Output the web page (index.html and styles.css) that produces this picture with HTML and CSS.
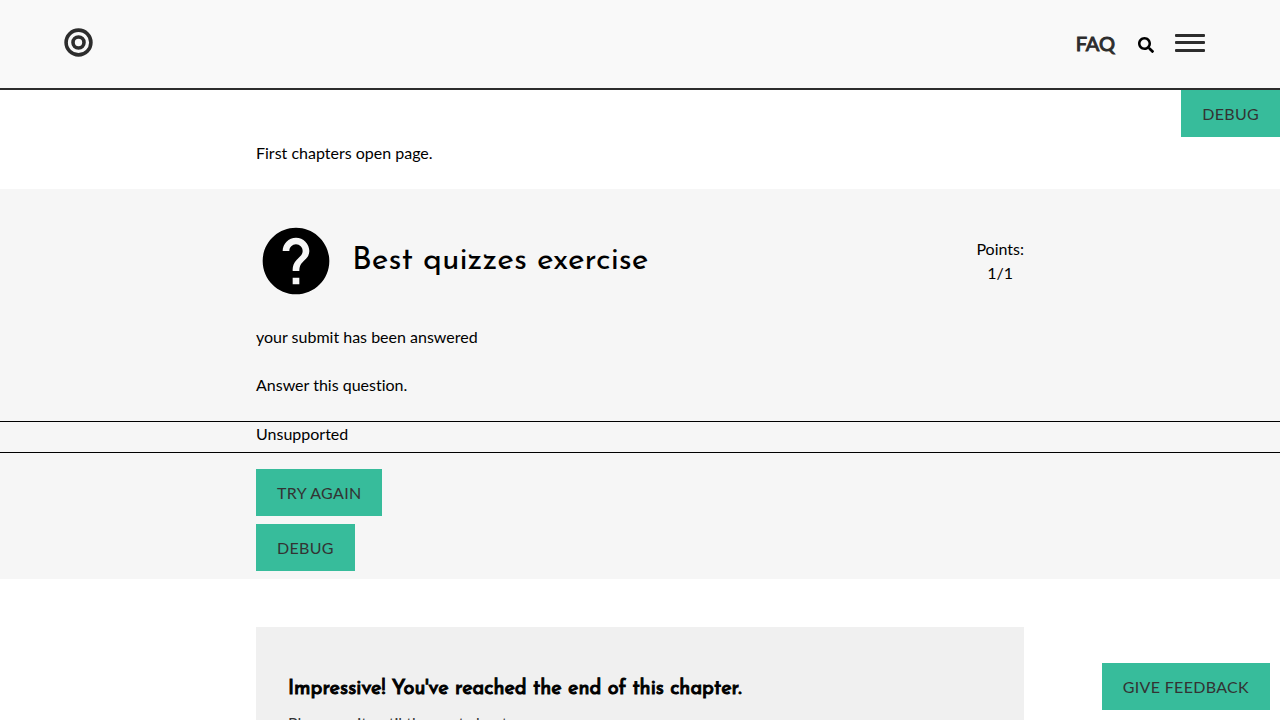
FILE: index.html
```html
<!DOCTYPE html>
<html lang="en">
<head>
<meta charset="utf-8">
<meta name="viewport" content="width=device-width, initial-scale=1">
<title>First chapters open page</title>
<link rel="stylesheet" href="styles.css">
</head>
<body>
<header class="site-header">
  <a class="logo" href="#" aria-label="Home">
    <svg width="29" height="29" viewBox="0 0 29 29" fill="none" stroke="#2d2d2d" stroke-width="3.6" aria-hidden="true"><circle cx="14.5" cy="14.5" r="12.4"/><circle cx="14.5" cy="14.5" r="5.5"/></svg>
  </a>
  <nav class="site-nav">
    <a class="nav-link" href="#">FAQ</a>
    <button class="icon-button search-button" type="button" aria-label="Search">
      <svg width="16" height="16" viewBox="0 0 512 512" aria-hidden="true"><path d="M505 442.7L405.300 343c-4.500-4.500-10.600-7-17-7H372c27.600-35.300 44-79.700 44-128C416 93.100 322.900 0 208 0S0 93.100 0 208s93.100 208 208 208c48.300 0 92.700-16.400 128-44v16.300c0 6.400 2.500 12.500 7 17l99.700 99.700c9.400 9.400 24.600 9.400 33.900 0l28.300-28.300c9.400-9.400 9.400-24.600.1-34zM208 336c-70.700 0-128-57.200-128-128 0-70.700 57.200-128 128-128 70.700 0 128 57.200 128 128 0 70.700-57.200 128-128 128z"/></svg>
    </button>
    <button class="icon-button menu-button" type="button" aria-label="Open menu">
      <svg width="30" height="18" viewBox="0 0 30 18" fill="#2d2d2d" aria-hidden="true"><rect width="30" height="3" rx="1"/><rect y="7" width="30" height="3" rx="1"/><rect y="15" width="30" height="3" rx="1"/></svg>
    </button>
  </nav>
</header>
<main>
  <div class="page-tools"><button class="button" type="button">Debug</button></div>
  <p class="container intro">First chapters open page.</p>
  <section class="exercise">
    <div class="container exercise-header">
      <svg class="exercise-icon" viewBox="0 0 24 24" aria-hidden="true"><path d="M12 2C6.480 2 2 6.480 2 12s4.480 10 10 10 10-4.480 10-10S17.520 2 12 2zm1 17h-2v-2h2v2zm2.070-7.750l-.9.920C13.450 12.900 13 13.500 13 15h-2v-.5c0-1.100.450-2.100 1.170-2.830l1.240-1.260c.370-.360.590-.860.590-1.410 0-1.100-.9-2-2-2s-2 .9-2 2H8c0-2.210 1.790-4 4-4s4 1.790 4 4c0 .880-.360 1.680-.930 2.250z"/></svg>
      <h1 class="exercise-title">Best quizzes exercise</h1>
      <div class="points">Points:<br>1/1</div>
    </div>
    <p class="container paragraph">your submit has been answered</p>
    <p class="container paragraph">Answer this question.</p>
    <div class="unsupported"><div class="container">Unsupported</div></div>
    <div class="container actions">
      <button class="button" type="button">Try again</button>
      <button class="button" type="button">Debug</button>
    </div>
  </section>
  <section class="container chapter-end">
    <h2 class="chapter-title">Impressive! You've reached the end of this chapter.</h2>
    <p class="chapter-text">Please wait until the next chapter.</p>
  </section>
</main>
<button class="button feedback" type="button">Give feedback</button>
</body>
</html>
```
FILE: styles.css
```css
*, *::before, *::after { box-sizing: border-box; }
body {
  margin: 0;
  background: #fff;
  color: #000;
  font: 16px/24px Lato, sans-serif;
  font-variant-ligatures: none;
}
h1, h2, p { margin: 0; }
.site-header {
  display: flex;
  align-items: center;
  justify-content: space-between;
  min-height: 90px;
  padding: 0 75px 4px 64px;
  background: #f9f9f9;
  border-bottom: 2px solid #2d2d2d;
}
.logo { display: flex; }
.site-nav { display: flex; align-items: center; }
.nav-link {
  padding-top: 1px;
  margin-right: 23px;
  color: #2d2d2d;
  font-size: 20px;
  -webkit-text-stroke: 1px #2d2d2d;
  text-decoration: none;
}
.icon-button {
  display: flex;
  padding: 0;
  background: none;
  border: 0;
  cursor: pointer;
}
.search-button { padding-top: 5px; margin-right: 21px; }
.menu-button { padding-top: 1px; }
.page-tools { display: flex; justify-content: flex-end; margin-bottom: 4px; }
.button {
  padding: 12px 21px 11px;
  background: #37bc9b;
  color: #333;
  border: 0;
  font: 16px/24px Lato, sans-serif;
  letter-spacing: 0.02em;
  text-transform: uppercase;
  cursor: pointer;
}
.container { width: 100%; max-width: 768px; margin: 0 auto; }
.intro { padding-bottom: 24px; }
.exercise { padding: 32px 0 8px; background: #f6f6f6; }
.exercise-header {
  display: flex;
  align-items: center;
  gap: 16px;
  margin-bottom: 24px;
}
.exercise-icon { flex: none; width: 80px; height: 80px; }
.exercise-title {
  flex: 1;
  font: 400 32px/40px "Josefin Sans", Lato, sans-serif;
}
.points { text-align: center; }
.paragraph { margin-bottom: 24px; }
.unsupported {
  padding-bottom: 6px;
  margin-bottom: 16px;
  border: solid #000;
  border-width: 1px 0;
}
.actions {
  display: flex;
  flex-direction: column;
  align-items: flex-start;
  gap: 8px;
}
.chapter-end {
  margin-top: 48px;
  padding: 48px 32px;
  background: #f0f0f0;
}
.chapter-title {
  margin-bottom: 8px;
  font: 400 20px/28px "Josefin Sans", Lato, sans-serif;
  -webkit-text-stroke: 1px #000;
}
.chapter-text { color: #333; }
.feedback { position: fixed; right: 10px; bottom: 10px; }
```
